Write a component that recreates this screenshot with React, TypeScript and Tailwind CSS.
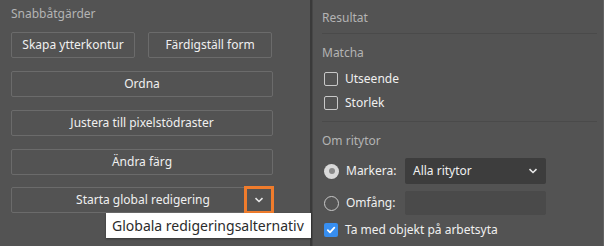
import React from "react";

const font = { fontFamily: '"Noto Sans", "Open Sans", sans-serif' };

function Btn({ children, className = "" }: { children: React.ReactNode; className?: string }) {
    return (
        <div className={`h-[26px] flex items-center justify-center rounded-[2px] border border-[#6b6b6b] text-[12px] text-[#f0f0f0] ${className}`}>
            {children}
        </div>
    );
}

function Check({ checked = false }: { checked?: boolean }) {
    return checked ? (
        <span className="w-[14px] h-[14px] rounded-[2px] bg-[#378ef0] flex items-center justify-center">
            <svg width="10" height="10" viewBox="0 0 10 10">
                <path d="M1.8 5.2 L4 7.4 L8.3 2.6" fill="none" stroke="#fff" strokeWidth="1.8" strokeLinecap="round" strokeLinejoin="round" />
            </svg>
        </span>
    ) : (
        <span className="w-[14px] h-[14px] rounded-[2px] border border-[#c8c8c8]" />
    );
}

export default function App() {
    return (
        <div className="w-[604px] h-[246px] bg-[#535353] flex relative overflow-hidden" style={font}>
            {/* vänster panel */}
            <div className="w-[310px] shrink-0 pl-[11px] pr-[37px] pt-[5px] flex flex-col">
                <div className="text-[12px] text-[#b4b4b4] h-[17px] leading-[17px]">Snabbåtgärder</div>
                <div className="flex gap-[13px] mt-[10px]">
                    <Btn className="w-[124px]">Skapa ytterkontur</Btn>
                    <Btn className="w-[124px]">Färdigställ form</Btn>
                </div>
                <Btn className="mt-[13px]">Ordna</Btn>
                <Btn className="mt-[13px]">Justera till pixelstödraster</Btn>
                <Btn className="mt-[13px]">Ändra färg</Btn>
                <div className="mt-[12px] h-[26px] flex items-center rounded-[2px] border border-[#6b6b6b] text-[12px] text-[#f0f0f0] relative">
                    <span className="flex-1 text-center pl-[2px]">Starta global redigering</span>
                    <span className="absolute right-[-2px] top-[-2px] w-[30px] h-[28px] border-[3px] border-[#f07c2c] flex items-center justify-center">
                        <svg width="10" height="6" viewBox="0 0 10 6">
                            <path d="M1.5 1.2 L5 4.5 L8.5 1.2" fill="none" stroke="#e8e8e8" strokeWidth="1.6" />
                        </svg>
                    </span>
                </div>
            </div>

            <div className="absolute left-[106px] top-[213px] w-[205px] h-[25px] bg-white shadow-[0_1px_2px_rgba(0,0,0,0.35)] flex items-center pl-[6px] text-[14px] text-[#2c2c2c] z-10">
                Globala redigeringsalternativ
            </div>

            {/* avdelare */}
            <div className="w-[3px] shrink-0 bg-[#3a3a3a] border-r border-[#474747]" />

            {/* höger panel */}
            <div className="flex-1 pl-[9px] pr-[6px] pt-[6px] flex flex-col border-r border-[#626262]">
                <div className="text-[12px] text-[#b4b4b4] h-[24px] leading-[24px]">Resultat</div>
                <div className="h-px bg-[#4a4a4a] mt-[3px]" />
                <div className="text-[12px] text-[#b4b4b4] mt-[10px] h-[17px] leading-[17px]">Matcha</div>
                <div className="flex items-center gap-[7px] mt-[9px] h-[18px] text-[12px] text-[#f0f0f0] pl-[2px]">
                    <Check />Utseende
                </div>
                <div className="flex items-center gap-[7px] mt-[6px] h-[18px] text-[12px] text-[#f0f0f0] pl-[2px]">
                    <Check />Storlek
                </div>
                <div className="h-px bg-[#4a4a4a] mt-[9px]" />
                <div className="text-[12px] text-[#b4b4b4] mt-[10px] h-[17px] leading-[17px]">Om ritytor</div>
                <div className="flex items-center mt-[9px] h-[26px] text-[12px] text-[#f0f0f0] pl-[2px]">
                    <span className="w-[15px] h-[15px] rounded-full bg-[#d9d9d9] flex items-center justify-center">
                        <span className="w-[6px] h-[6px] rounded-full bg-[#8a8a8a]" />
                    </span>
                    <span className="ml-[7px] w-[59px]">Markera:</span>
                    <div className="w-[141px] h-[26px] bg-[#3d3d3d] rounded-[2px] flex items-center justify-between pl-[8px] pr-[8px] text-[#f0f0f0]">
                        Alla ritytor
                        <svg width="10" height="6" viewBox="0 0 10 6">
                            <path d="M1.5 1.2 L5 4.5 L8.5 1.2" fill="none" stroke="#e8e8e8" strokeWidth="1.6" />
                        </svg>
                    </div>
                </div>
                <div className="flex items-center mt-[7px] h-[24px] text-[12px] text-[#f0f0f0] pl-[2px]">
                    <span className="w-[15px] h-[15px] rounded-full border-[1.5px] border-[#c8c8c8]" />
                    <span className="ml-[7px] w-[59px]">Omfång:</span>
                    <div className="w-[141px] h-[24px] bg-[#4a4a4a] rounded-[2px]" />
                </div>
                <div className="flex items-center gap-[7px] mt-[6px] h-[18px] text-[12px] text-[#f0f0f0] pl-[2px]">
                    <Check checked />Ta med objekt på arbetsyta
                </div>
            </div>
        </div>
    );
}
